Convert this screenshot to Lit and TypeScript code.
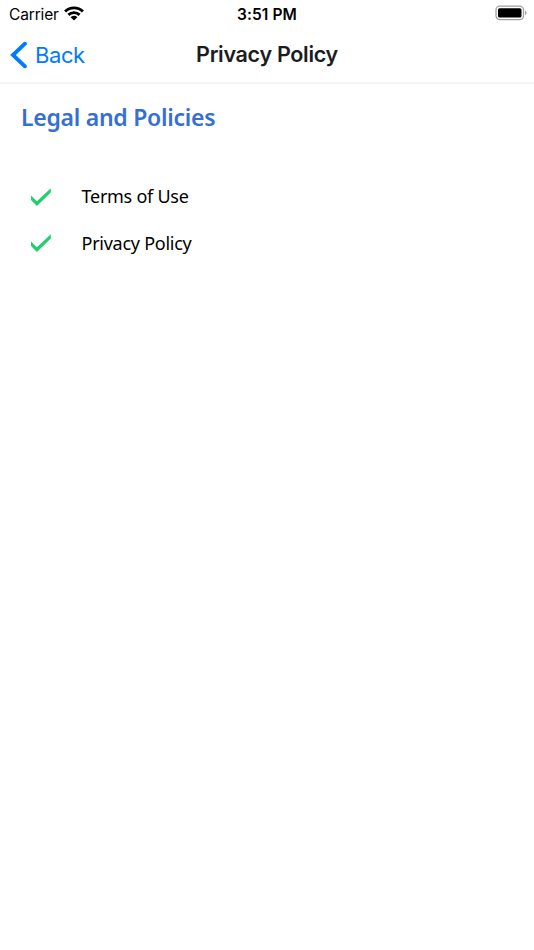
import { LitElement, html, css } from "lit";
import { customElement } from "lit/decorators.js";

@customElement("app-root")
export class AppRoot extends LitElement {
  static styles = css`
    :host {
      display: block;
      height: 100vh;
      background: #fff;
      font-family: Inter, "Liberation Sans", sans-serif;
      color: #000;
      overflow: hidden;
    }
    * {
      box-sizing: border-box;
    }
    svg {
      display: block;
    }
    .status,
    .nav {
      display: grid;
      grid-template-columns: 1fr auto 1fr;
      align-items: center;
      white-space: nowrap;
    }
    .status {
      height: 27px;
      padding: 0 7px 0 9px;
      font-size: 15.5px;
      line-height: 25px;
    }
    .carrier {
      display: flex;
      align-items: center;
      gap: 6px;
    }
    .name {
      width: 49px;
      padding-top: 2px;
      letter-spacing: -0.15px;
    }
    .carrier svg {
      margin-bottom: 1px;
    }
    .time {
      font-weight: 600;
      margin-left: -2px;
      padding-top: 2px;
      letter-spacing: 0.1px;
    }
    .battery {
      justify-self: end;
      margin-bottom: 1px;
    }
    .nav {
      height: 57px;
      padding: 0 10px 1px;
      border-bottom: 2px solid #f5f5f5;
    }
    .back {
      display: flex;
      align-items: center;
      gap: 8px;
      color: #007aff;
      font-size: 22px;
      line-height: 28px;
      letter-spacing: -0.4px;
      padding-top: 1px;
    }
    .title {
      margin: 0;
      font-size: 21.5px;
      font-weight: 600;
      line-height: 28px;
      color: #1c1c1e;
      letter-spacing: -0.3px;
    }
    main {
      padding: 17px 21px;
      font-family: "Noto Sans", sans-serif;
    }
    h2 {
      margin: 0 0 40px;
      font-size: 23px;
      font-weight: 600;
      line-height: 32px;
      color: #356fd6;
      letter-spacing: -0.27px;
    }
    ul {
      list-style: none;
      margin: 0;
      padding: 0 0 0 9px;
    }
    li {
      display: flex;
      align-items: center;
      gap: 29.5px;
      height: 46.5px;
      font-size: 18px;
      letter-spacing: -0.26px;
    }
    li svg {
      margin-top: 1px;
    }
  `;

  private row(label: string) {
    return html`<li>
      <svg width="22" height="20" viewBox="0 0 22 20">
        <path d="M1 8.6L6.9 14.3L20.8 1.2V5.4L6.9 18.9L1 12.9Z" fill="#20cf70" />
      </svg>
      <span>${label}</span>
    </li>`;
  }

  render() {
    return html`
      <div class="status">
        <div class="carrier">
          <span class="name">Carrier</span>
          <svg width="20" height="15" viewBox="0 0 20 15">
            <g fill="none" stroke="#000" stroke-width="2.9">
              <path d="M1.1 5.5a12.7 12.7 0 0 1 17.8 0" />
              <path d="M4.4 8.9a8 8 0 0 1 11.2 0" />
            </g>
            <path d="M6.6 11.2a4.9 4.9 0 0 1 6.8 0L10 14.6Z" />
          </svg>
        </div>
        <div class="time">3:51 PM</div>
        <svg class="battery" width="32" height="16" viewBox="0 0 32 16">
          <rect x="1" y="1.2" width="27.5" height="13.4" rx="3.8" fill="#fff" stroke="#a2a2a2" stroke-width="1.3" />
          <rect x="3" y="3.2" width="23.5" height="9.4" rx="1.6" />
          <path d="M30 5.5c2 .8 2 3.8 0 4.6Z" fill="#a2a2a2" />
        </svg>
      </div>
      <nav class="nav">
        <div class="back">
          <svg width="17" height="28" viewBox="0 0 17 28">
            <path d="M14.9 2.7L3 14L14.9 25.3" fill="none" stroke="#007aff" stroke-width="3.9" stroke-linecap="round" stroke-linejoin="miter" />
          </svg>
          <span>Back</span>
        </div>
        <h1 class="title">Privacy Policy</h1>
      </nav>
      <main>
        <h2>Legal and Policies</h2>
        <ul>
          ${["Terms of Use", "Privacy Policy"].map((label) => this.row(label))}
        </ul>
      </main>
    `;
  }
}
